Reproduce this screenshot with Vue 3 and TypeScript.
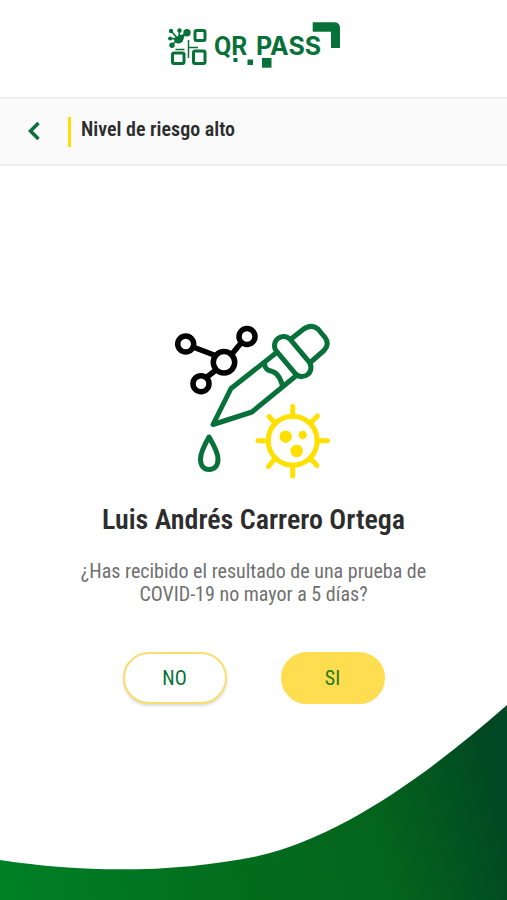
<script setup lang="ts">
import { ref } from 'vue'

type Answer = 'no' | 'si'

const patient = 'Luis Andrés Carrero Ortega'
const answer = ref<Answer | null>(null)

function choose(value: Answer) {
  answer.value = value
}
</script>

<template>
  <div class="screen">
    <header class="brand">
      <svg class="logo" viewBox="166 18 176 54" role="img" aria-label="QR PASS">
        <g fill="none" stroke="#08713a" stroke-width="3">
          <rect x="195" y="30.5" width="10" height="10" rx="1.5" />
          <rect x="172.5" y="53" width="11.5" height="10.5" rx="1.5" />
          <rect x="193.5" y="51" width="11.5" height="12.5" rx="1.5" />
        </g>
        <path d="M188.5 40V58M188.5 47.5H198M175.5 49.5H184.500" fill="none" stroke="#08713a" stroke-width="1.5" />
        <g stroke="#08713a" stroke-width="1.6" fill="#08713a">
          <path d="M178 39L171.2 31M179 38L179.5 30.5M179 38L187 32.7M178 39L170.2 38.5M178 39L172 45" />
          <path d="M174.5 38.5Q178.500 37.500 180 35.500Q182 36 184 35Q183 38 182 41Q180 43.500 177 42.500Q175 41.500 174.500 38.500Z" />
        </g>
        <g fill="#08713a">
          <circle cx="171" cy="31" r="2.2" />
          <circle cx="179.500" cy="30.500" r="2.2" />
          <circle cx="187" cy="32.7" r="3.7" />
          <circle cx="170.2" cy="38.5" r="2.1" />
          <circle cx="172" cy="45.2" r="2.7" />
          <rect x="233.5" y="58" width="4" height="4" />
          <rect x="247.5" y="59.5" width="5.5" height="5.5" />
          <rect x="262" y="58" width="9.5" height="9.7" />
          <path d="M312.7 22.3H334Q340 22.3 340 28V48H331V31.7H312.7Z" />
          <text class="wordmark" x="214" y="55">QR</text>
          <text class="wordmark wide" x="256" y="55">PASS</text>
        </g>
      </svg>
    </header>

    <nav class="bar">
      <button class="back" type="button" aria-label="Volver">
        <svg viewBox="0 0 14 22" class="chevron">
          <path d="M11.5 2L3.5 10L11.5 18" fill="none" stroke="#08713a" stroke-width="3.5" />
        </svg>
      </button>
      <h1 class="bar-title">Nivel de riesgo alto</h1>
    </nav>

    <main class="content">
      <svg class="art" viewBox="171 320 165 162" aria-hidden="true">
        <g fill="none" stroke="#000" stroke-width="5.5">
          <path d="M193 347L214 355M232 354L241 343M216 370L207 377" />
          <circle cx="185.7" cy="344" r="8" />
          <circle cx="247" cy="336.5" r="8" />
          <circle cx="201" cy="383.7" r="8" />
          <circle cx="224" cy="362.3" r="10.7" />
        </g>
        <g fill="none" stroke="#08713a" stroke-width="5" stroke-linejoin="round" stroke-linecap="round">
          <path d="M276 353L231 388.5L213 424.5L252 412L297 375" />
          <path d="M264.5 363.5C265 372 272 370 276 373.5C280 377 281 380 282.5 386" />
          <path d="M291 339L303 329.5Q311 323.5 318 329L325 337.5Q330 344 324 350.5L312 361" />
          <path d="M283.5 345.5L302 367.5" stroke-width="23" />
          <path d="M283.5 345.5L302 367.5" stroke="#fff" stroke-width="13" />
          <path d="M209 437C205 444 200.5 452 200.5 459C200.5 466 204 469.5 209 469.5C214.5 469.5 218 466 218 459C218 452 213 444 209 437Z" />
        </g>
        <g fill="none" stroke="#ffe000" stroke-width="5" stroke-linecap="round">
          <circle cx="292.7" cy="440.7" r="24.5" />
          <path d="M292.7 416V406.5M292.7 465V476M268 440.7H258M317 440.7H327.5M275 423L269 416.5M310.5 423L317.5 416M275 458.5L268.5 466.5M310.5 458.5L317 465.5" />
        </g>
        <g fill="#ffe000">
          <circle cx="285.7" cy="436.7" r="6.2" />
          <circle cx="302.7" cy="435" r="4.2" />
          <circle cx="296.7" cy="451" r="6.2" />
        </g>
      </svg>

      <h2 class="name">{{ patient }}</h2>
      <p class="question">¿Has recibido el resultado de una prueba de COVID-19 no mayor a 5 días?</p>

      <div class="actions">
        <button class="pill outline" type="button" :aria-pressed="answer === 'no'" @click="choose('no')">NO</button>
        <button class="pill solid" type="button" :aria-pressed="answer === 'si'" @click="choose('si')">SI</button>
      </div>
    </main>

    <svg class="wave" viewBox="0 0 507 195" aria-hidden="true">
      <defs>
        <linearGradient id="wave-fill" gradientUnits="userSpaceOnUse" x1="0" y1="195" x2="500" y2="70">
          <stop offset="0" stop-color="#008126" />
          <stop offset="0.4" stop-color="#026f1e" />
          <stop offset="0.75" stop-color="#04641c" />
          <stop offset="1" stop-color="#004723" />
        </linearGradient>
      </defs>
      <path d="M0 155C90 169 180 167 258 151C340 132 425 72 507 0V195H0Z" fill="url(#wave-fill)" />
    </svg>
  </div>
</template>

<style>
body {
  margin: 0;
  background: #fff;
}
</style>

<style scoped>
.screen {
  display: flex;
  flex-direction: column;
  min-height: 100vh;
  background: #fff;
  font-family: 'Roboto Condensed', 'Liberation Sans Narrow', Roboto, sans-serif;
}

.brand {
  display: flex;
  justify-content: center;
  padding: 18px 0 25px;
}

.logo {
  display: block;
  width: 176px;
  height: 54px;
}

.wordmark {
  font-family: Roboto, sans-serif;
  font-size: 25px;
  font-weight: 700;
}

.wide {
  font-family: Inter, sans-serif;
}

.bar {
  display: flex;
  align-items: center;
  gap: 24px;
  box-sizing: border-box;
  height: 69px;
  padding: 0 24px;
  border-top: 2px solid #eee;
  border-bottom: 2px solid #eee;
  background: #fafafa;
}

.back {
  padding: 0 3px;
  border: 0;
  background: none;
  cursor: pointer;
}

.chevron {
  display: block;
  width: 14px;
  height: 22px;
}

.bar-title {
  margin: 0;
  padding: 0 0 6px 10px;
  border-left: 3px solid #ffe000;
  color: #2d2d2d;
  font-size: 20px;
  font-weight: 600;
  line-height: 24px;
}

.content {
  display: flex;
  flex: 1;
  flex-direction: column;
  align-items: center;
  padding: 154px 24px 0;
}

.art {
  display: block;
  width: 165px;
  height: 162px;
}

.name {
  margin: 20px 0 0;
  color: #2d2d2d;
  font-size: 28px;
  font-weight: 600;
  line-height: 36px;
  text-align: center;
}

.question {
  max-width: 360px;
  margin: 22px 0 0;
  color: #707070;
  font-size: 20px;
  line-height: 23px;
  text-align: center;
}

.actions {
  display: flex;
  gap: 54px;
  margin-top: 46px;
}

.pill {
  box-sizing: border-box;
  width: 104px;
  height: 52px;
  border: 2px solid #ffdd50;
  border-radius: 26px;
  color: #08713a;
  font-family: inherit;
  font-size: 20px;
  cursor: pointer;
}

.outline {
  border-color: #fbdc6e;
  background: #fff;
  box-shadow: 0 2px 3px rgba(0, 0, 0, 0.14);
}

.solid {
  background: #ffdd50;
  color: #287a1c;
}

.wave {
  display: block;
  width: 100%;
}
</style>
